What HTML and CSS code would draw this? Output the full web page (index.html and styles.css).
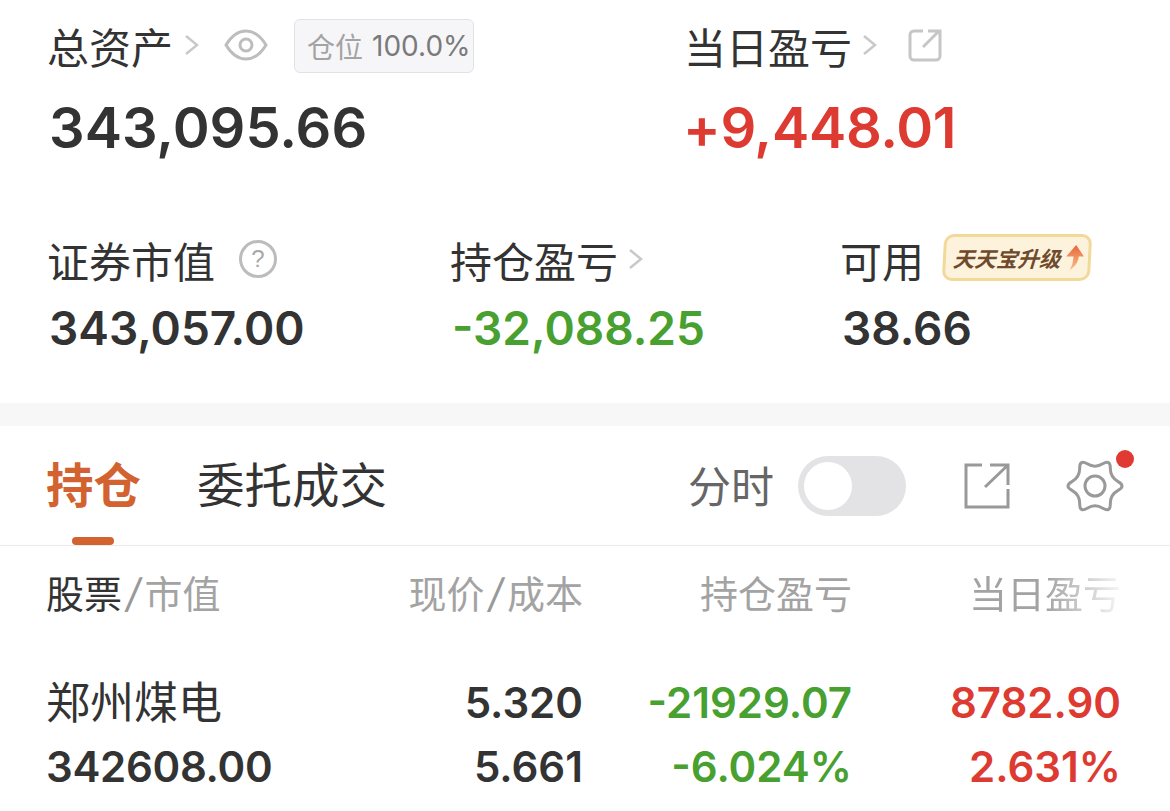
FILE: index.html
```html
<!DOCTYPE html>
<html lang="zh-CN">
<head>
    <meta charset="UTF-8">
    <meta name="viewport" content="width=device-width, initial-scale=1.0">
    <title>持仓</title>
    <link rel="stylesheet" href="styles.css">
</head>
<body>
    <section class="summary">
        <div class="summary-top">
            <div class="stat">
                <div class="label">
                    <span>总资产</span>
                    <svg class="chevron" viewBox="0 0 16 24"><path d="M2 3l11 9-11 9"/></svg>
                    <svg class="icon-eye" viewBox="0 0 44 32"><path d="M2 16C8 6 14 2 22 2s14 4 20 14c-6 10-12 14-20 14S8 26 2 16z"/><circle cx="22" cy="16" r="6"/></svg>
                    <span class="badge">仓位 <em>100.0%</em></span>
                </div>
                <div class="value value-lg">343,095.66</div>
            </div>
            <div class="stat">
                <div class="label">
                    <span>当日盈亏</span>
                    <svg class="chevron chevron-tight" viewBox="0 0 16 24"><path d="M2 3l11 9-11 9"/></svg>
                    <svg class="icon-share" viewBox="0 0 34 34"><path d="M15 3H6a4 4 0 0 0-4 4v21a4 4 0 0 0 4 4h22a4 4 0 0 0 4-4v-13"/><path d="M15 19L31 3M20 3h12v12"/></svg>
                </div>
                <div class="value value-lg up">+9,448.01</div>
            </div>
        </div>
        <div class="summary-bottom">
            <div class="stat">
                <div class="label">
                    <span>证券市值</span>
                    <span class="help">?</span>
                </div>
                <div class="value">343,057.00</div>
            </div>
            <div class="stat">
                <div class="label">
                    <span>持仓盈亏</span>
                    <svg class="chevron chevron-tight" viewBox="0 0 16 24"><path d="M2 3l11 9-11 9"/></svg>
                </div>
                <div class="value down">-32,088.25</div>
            </div>
            <div class="stat">
                <div class="label">
                    <span>可用</span>
                    <span class="promo">天天宝升级<svg viewBox="0 0 20 26"><defs><linearGradient id="arrow" x1="0" y1="0" x2="0" y2="1"><stop offset="0" stop-color="#e9653a"/><stop offset="1" stop-color="#f7c08c"/></linearGradient></defs><path d="M11 1l8 11h-5c0 5-3 10-8 13 2-4 3-8 3-13H2z" fill="url(#arrow)"/></svg></span>
                </div>
                <div class="value">38.66</div>
            </div>
        </div>
    </section>

    <div class="band"></div>

    <nav class="tabs">
        <a class="tab active">持仓</a>
        <a class="tab">委托成交</a>
        <div class="tools">
            <span class="tools-label">分时</span>
            <span class="toggle"><span class="knob"></span></span>
            <svg class="icon-export" viewBox="0 0 46 46"><path d="M18 2H2v42h42V26"/><path d="M21 24L44 2M26 2h18v20"/></svg>
            <span class="gear">
                <svg viewBox="0 0 60 60"><path d="M53.08 25.63Q45.15 21.25 45.33 12.2Q45.5 3.15 37.75 7.83Q30 12.5 22.25 7.83Q14.5 3.15 14.68 12.2Q14.85 21.25 6.93 25.63Q-1 30 6.93 34.38Q14.85 38.75 14.68 47.8Q14.5 56.85 22.25 52.17Q30 47.5 37.75 52.17Q45.5 56.85 45.33 47.8Q45.15 38.75 53.08 34.38Q61 30 53.08 25.63z"/><circle cx="30" cy="30" r="10"/></svg>
                <i class="dot"></i>
            </span>
        </div>
    </nav>

    <section class="positions">
        <div class="row head">
            <div class="cell-name"><b>股票</b><i>/</i>市值</div>
            <div>现价<i>/</i>成本</div>
            <div>持仓盈亏</div>
            <div class="fade">当日盈亏</div>
        </div>
        <div class="row stock">
            <div class="cell-name stock-name">郑州煤电</div>
            <div>5.320</div>
            <div class="down">-21929.07</div>
            <div class="up">8782.90</div>
        </div>
        <div class="row stock">
            <div class="cell-name stock-value">342608.00</div>
            <div>5.661</div>
            <div class="down">-6.024%</div>
            <div class="up">2.631%</div>
        </div>
    </section>
</body>
</html>
```

FILE: styles.css
```css
* {
    margin: 0;
    padding: 0;
    box-sizing: border-box;
}

body {
    font-family: 'Inter', 'Noto Sans CJK SC', sans-serif;
    height: 811px;
    background: #fff;
    color: #333;
    overflow: hidden;
}

.up { color: #dd3b32; }
.down { color: #47a02f; }

/* summary block */
.summary {
    height: 403px;
    padding: 16px 0 0 47px;
}

.summary-top {
    display: grid;
    grid-template-columns: 637px 1fr;
    height: 214px;
}

.summary-bottom {
    display: grid;
    grid-template-columns: 403px 390px 1fr;
}

.label {
    display: flex;
    align-items: center;
    height: 58px;
    font-family: 'Noto Sans CJK SC', sans-serif;
    font-size: 42px;
    color: #333;
}

.value {
    font-size: 46px;
    font-weight: 600;
    line-height: 58px;
    margin: 11px 0 0 2px;
}

.value-lg {
    font-size: 56px;
    line-height: 70px;
    margin-top: 19px;
}

.value-lg.up {
    margin-left: -1px;
    letter-spacing: -0.3px;
}

.chevron {
    width: 16px;
    height: 24px;
    margin-left: 11px;
    fill: none;
    stroke: #c9c9c9;
    stroke-width: 2.5;
}

.chevron-tight { margin-left: 10px; }

.icon-eye {
    width: 44px;
    height: 32px;
    margin-left: 24px;
    fill: none;
    stroke: #bdbdbd;
    stroke-width: 3;
}

.badge {
    display: flex;
    align-items: center;
    width: 180px;
    height: 54px;
    margin: 2px 0 0 26px;
    padding-left: 12px;
    background: #f6f6f9;
    border: 1px solid #e2e2e4;
    border-radius: 6px;
    font-size: 28px;
    color: #a3a3a3;
    white-space: nowrap;
}

.badge em {
    font-family: 'Inter', sans-serif;
    font-style: normal;
    font-size: 28px;
    color: #7a7a7a;
    margin-left: 9px;
}

.icon-share {
    width: 34px;
    height: 34px;
    margin-left: 30px;
    fill: none;
    stroke: #c6c6c6;
    stroke-width: 3;
}

.help {
    display: flex;
    align-items: center;
    justify-content: center;
    width: 38px;
    height: 38px;
    margin-left: 24px;
    border: 3px solid #bcbcbc;
    border-radius: 50%;
    font-family: 'Liberation Sans', sans-serif;
    font-size: 24px;
    color: #a8a8a8;
}

.promo {
    display: flex;
    align-items: center;
    width: 148px;
    height: 47px;
    margin: 0 0 4px 19px;
    padding-left: 7px;
    background: #fdf3dc;
    border: 3px solid #f2d99a;
    border-radius: 10px;
    transform: skewX(-3deg);
    font-size: 21.5px;
    font-weight: 700;
    font-style: italic;
    color: #6f4a2c;
    white-space: nowrap;
}

.promo svg {
    width: 21px;
    height: 27px;
    margin-left: 3px;
}

.band {
    height: 23px;
    background: #f7f7f8;
}

/* tabs */
.tabs {
    display: flex;
    align-items: flex-start;
    height: 120px;
    padding: 30px 0 0 46px;
    border-bottom: 1px solid #ebebeb;
}

.tab {
    position: relative;
    height: 61px;
    margin-right: 56px;
    font-family: 'Noto Sans CJK SC', sans-serif;
    font-size: 47.5px;
    line-height: 54px;
    color: #333;
}

.tab.active {
    color: #d2622f;
    font-weight: 700;
}

.tab.active::after {
    content: '';
    position: absolute;
    left: 26px;
    bottom: -28px;
    width: 42px;
    height: 8px;
    background: #d2622f;
    border-radius: 4px;
}

.tools {
    display: flex;
    align-items: center;
    height: 60px;
    margin-left: auto;
    padding-right: 45px;
}

.tools-label {
    font-family: 'Noto Sans CJK SC', sans-serif;
    font-size: 43px;
    line-height: 56px;
    margin-bottom: 4px;
    color: #666;
}

.toggle {
    display: block;
    width: 108px;
    height: 60px;
    margin-left: 24px;
    padding: 6px;
    background: #e3e3e5;
    border-radius: 30px;
}

.knob {
    display: block;
    width: 48px;
    height: 48px;
    background: #fff;
    border-radius: 50%;
}

.icon-export {
    width: 46px;
    height: 46px;
    margin-left: 58px;
    fill: none;
    stroke: #999;
    stroke-width: 3;
}

.gear {
    position: relative;
    width: 60px;
    height: 60px;
    margin-left: 55px;
}

.gear svg {
    display: block;
    fill: none;
    stroke: #999;
    stroke-width: 3;
}

.dot {
    position: absolute;
    top: -6px;
    right: -9px;
    width: 18px;
    height: 18px;
    background: #e03a32;
    border-radius: 50%;
}

/* positions table */
.positions {
    padding: 0 49px 0 46px;
}

.row {
    display: grid;
    grid-template-columns: 327px 210px 269px 269px;
    text-align: right;
}

.cell-name { text-align: left; }

.head {
    height: 125px;
    padding-top: 21px;
    font-family: 'Noto Sans CJK SC', sans-serif;
    font-size: 38px;
    line-height: 50px;
    color: #a3a3a3;
}

.head b {
    font-weight: 400;
    color: #333;
}

.head i {
    font-family: 'Inter', sans-serif;
    font-size: 40px;
    color: #999;
    margin: 0 4px;
}

.fade {
    -webkit-mask-image: linear-gradient(90deg, #000 72%, rgba(0, 0, 0, 0.1) 100%);
    mask-image: linear-gradient(90deg, #000 72%, rgba(0, 0, 0, 0.1) 100%);
}

.stock {
    height: 64px;
    font-size: 42px;
    font-weight: 600;
    line-height: 64px;
    color: #333;
}

.stock-name {
    font-family: 'Noto Sans CJK SC', sans-serif;
    font-size: 44px;
    font-weight: 400;
    line-height: 58px;
}

.stock-value { letter-spacing: -0.3px; }
```
